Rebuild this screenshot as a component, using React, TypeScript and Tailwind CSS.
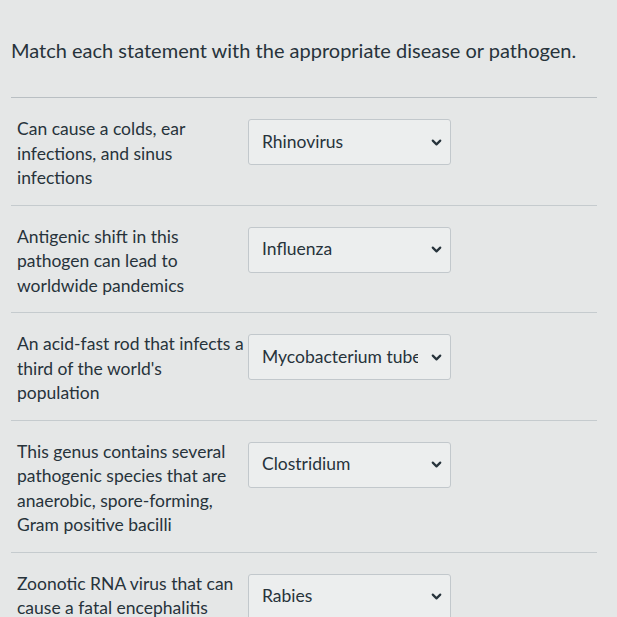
import { ChevronDown } from "lucide-react";

const rows = [
  { q: ["Can cause a colds, ear", "infections, and sinus", "infections"], a: "Rhinovirus" },
  { q: ["Antigenic shift in this", "pathogen can lead to", "worldwide pandemics"], a: "Influenza" },
  { q: ["An acid-fast rod that infects a", "third of the world's", "population"], a: "Mycobacterium tube" },
  {
    q: ["This genus contains several", "pathogenic species that are", "anaerobic, spore-forming,", "Gram positive bacilli"],
    a: "Clostridium",
  },
  { q: ["Zoonotic RNA virus that can", "cause a fatal encephalitis"], a: "Rabies" },
];

export default function App() {
  return (
    <div
      className="w-[617px] h-[617px] overflow-hidden bg-[#e5e7e7] text-[#27333b]"
      style={{ fontFamily: "Lato, 'Open Sans', sans-serif" }}
    >
      <div className="pl-[11px] pr-[20px]">
        <h1 className="pt-[36px] pb-[33px] text-[20px] leading-[28px]">
          Match each statement with the appropriate disease or pathogen.
        </h1>
        <div className="border-t border-[#b9bfc3]" />
        {rows.map((r, i) => (
          <div key={i} className="border-b border-[#c5cbce] pl-[6px] pt-[19px] pb-[14px] flex gap-[5px]">
            <div className="w-[226px] text-[17.5px] leading-[24.5px]">
              {r.q.map((l, j) => (
                <div key={j} className="whitespace-nowrap">{l}</div>
              ))}
            </div>
            <div className="w-[203px] h-[46px] mt-[2px] border border-[#c2c8cc] rounded-[3px] bg-[#eceeee] flex items-center pl-[13px] pr-[6px]">
              <span className="w-[156px] text-[17.5px] overflow-hidden whitespace-nowrap">{r.a}</span>
              <span className="flex-1" />
              <ChevronDown size={15} strokeWidth={3.5} className="shrink-0 text-[#27333b]" />
            </div>
          </div>
        ))}
      </div>
    </div>
  );
}
